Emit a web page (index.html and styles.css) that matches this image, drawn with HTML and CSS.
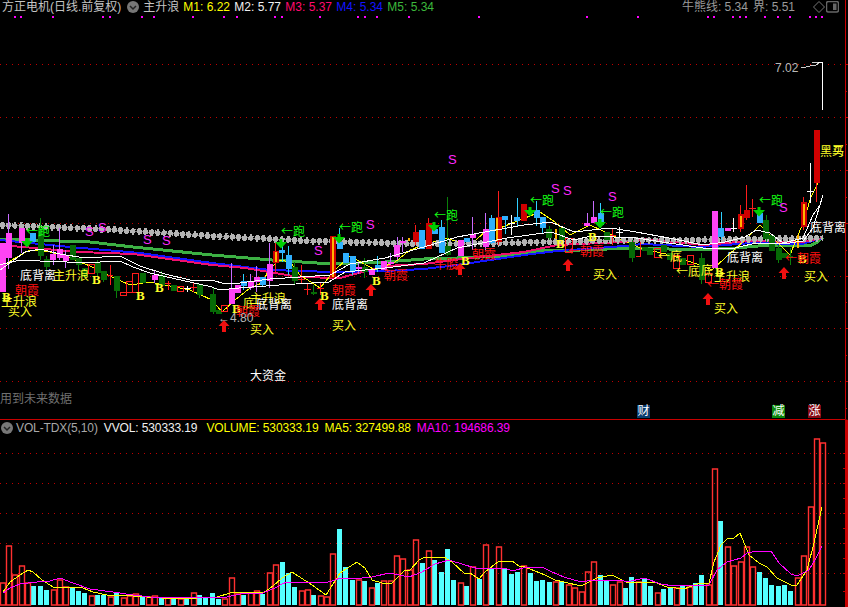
FILE: index.html
```html
<!DOCTYPE html>
<html lang="zh">
<head>
<meta charset="utf-8">
<title>方正电机</title>
<link rel="stylesheet" href="styles.css">
</head>
<body>
<div class="app">
  <section class="price-panel">
    <svg class="canvas" viewBox="0 0 846 419" width="846" height="419" aria-hidden="false">
      <defs>
        <path id="up" d="M0 0l5.5 6h-3.500v6h-4v-6h-3.500z"/>
        <path id="down" d="M-1.500 0h3v3h4.500l-6 6.500-6-6.500h4.500z"/>
      </defs>
      <path class="grid" d="M0 64.500H845M0 117.500H845M0 170.500H845M0 223.500H845M0 276.500H845M0 328.500H845M0 381.500H845"/>
      <path class="ticks" d="M845 64.500h3M845 91h2M845 117.500h3M845 144h2M845 170.500h3M845 197h2M845 223.500h3M845 250h2M845 276.500h3M845 302h2M845 328.500h3M845 355h2M845 381.500h3M845 408h2"/>
      <path class="mdots" d="M14 17h2M20 17h2M52 17h2M102 17h2M109 17h2M141 17h2M153 17h2M192 17h2M223 17h2M236 17h2M274 17h2M281 17h2M319 17h2M357 17h2M364 17h2M376 17h2M408 17h2M478 17h2M586 17h2M637 17h2M707 17h2M713 17h2M732 17h2M739 17h2M745 17h2M764 17h2M777 17h2M789 17h2M809 17h2M815 17h2M821 17h2"/>

      <polyline class="m5" points="0,239 90,242 133,247 212,255 272,260 332,264 385,262 424,259 457,258 504,256 544,250 580,250 634,248 669,249 696,250 736,248 769,245 809,246 816,243 823,237"/>
      <polyline class="m4" points="0,240 70,247 140,253 212,263 270,270 332,272 385,271 424,269 457,265 524,255 557,251 624,246 643,244 700,247 752,243 802,244 823,238"/>
      <polyline class="m3" points="0,245 80,252 133,254 212,265 245,268 299,277 340,278 385,266 424,264 470,258 524,252 557,245 624,242 646,239 703,245 750,241 802,242 823,238"/>
      <polyline class="m1" points="0,268 15,258 30,250 50,252 70,258 90,266 110,276 130,285 150,282 170,286 190,290 212,300 222,312 235,300 250,288 262,283 270,268 280,260 290,262 300,275 320,288 335,270 350,256 375,270 395,262 410,250 424,245 445,238 470,245 485,232 500,228 525,218 540,212 555,222 570,235 590,225 605,232 640,248 670,255 700,265 712,270 725,258 745,240 760,225 775,240 790,255 803,223 811,197 818,183"/>
      <g class="diamonds">
        <polyline class="d-line" points="0,225 100,229 212,236 312,241 424,244 500,243 636,240 700,240 823,238"/>
        <polyline class="d-wide" points="0,225 100,229 212,236 312,241 424,244 500,243 636,240 700,240 823,238"/>
        <polyline class="d-tall" points="0,225 100,229 212,236 312,241 424,244 500,243 636,240 700,240 823,238"/>
      </g>

      <path class="w-pk" d="M8.500 214V269M21.500 228V253M53 245V265M59.500 228V260M65.500 250V268M154.500 270V283M231.500 263V304M250.500 274V290M256.500 266V292M269.500 243V288M358.500 262V274M390.500 253V265M397 237V260M402.500 237V252M472.500 217V250M485.500 213V250M587 213V226M593.500 201V223"/>
      <path class="w-sky" d="M243.500 274V290M262.500 277V287M282 243V262M288.500 246V275M339.500 228V242M352.500 256V275M377.500 256V272M441.500 220V253M491.500 215V244M505 216V234M517 198V227M536.500 201V226M542.500 217V234M600.500 203V228M721 212V240"/>
      <path class="w-gr" d="M40.500 218V260M46.500 256V270M78.500 258V270M97.500 260V277M103.500 271V282M116.500 276V298M161.500 271V288M199.500 284V298M213 288V314M294.500 262V284M313.500 285V295M364.500 258V278M447.500 197V256M549.500 226V240M632.500 240V262M766.500 215V242M778.500 245V263M790.500 248V265M701.500 253V284"/>
      <path class="w-rd" d="M110.500 265V285M107 275h6M168.500 281V290M165 283h6M193.500 282V292M190 287h7M301.500 265V284M298 279h7M307.500 283V295M304 289h7M320.500 283V295M317 288h7M428.500 218V249M415.500 225V245M275.500 243V272M498.500 191V245M746.500 185V220M752.500 199V217M749 208h7M612.500 228V245M609 235h7M640.500 242V257M636 256h5M816.500 183V202M803.500 197V230M740.500 205V232"/>
      <path class="w-wh" d="M187.500 286V292M184 288h7M511.500 215V235M508 223h7M619.500 227V238M616 232h7M733.500 218V232M730 228h7M810.500 163V203M807 191h7M822.500 62V110M815 62.500h8"/>

      <path class="b-pk" d="M3 243V292M8.500 233V258M21.500 228V243M53 254V260M59.500 249V258M65.500 255V261M154.500 275V280M231.500 288V304M237.500 285V293M250.500 281V288M256.500 277V282M269.500 264V281M358.500 267V269M371.500 269V275M383.500 261V270M390.500 262V264M397 245V257M402.500 241V243M460.500 240V256M472.500 234V238M485.500 229V247M587 223V226M593.500 217V223M714.500 211V268M727.500 228V231"/>
      <path class="b-sky" d="M32.500 233V242M243.500 281V286M262.500 277V285M282 250V253M288.500 255V269M339.500 242V249M346 253V263M352.500 256V271M377.500 265V269M421.500 230V249M435 229V234M441.500 227V253M466.500 238V242M491.500 218V243M505 216V220M517 217V221M536.500 210V218M542.500 217V228M600.500 213V225M721 228V237M759.500 213V223"/>
      <path class="b-gr" d="M40.500 228V256M46.500 259V267M72.500 245V260M78.500 258V265M84.500 268V277M97.500 262V273M103.500 271V280M116.500 276V291M142.500 273V283M161.500 275V286M173.500 285V291M199.500 284V295M213 294V312M218.500 310V314M294.500 267V281M313.500 292V294M364.500 267V272M447.500 246V255M549 229V238M562 228V240M606.500 232V240M632 242V258M644.500 247V251M650 248V255M663.500 245V252M670 253V260M682.500 258V265M701.500 258V280M766 220V239M772 235V251M778.500 248V260M785 253V258M790 256V258"/>
      <path class="b-hol" d="M88.500 264H94V273H88.500zM120.500 292H126V295H120.500zM126.500 281H132V292H126.500zM132.500 273H138V292H132.500zM177.500 286H183V291H177.500zM221.500 305H227V311H221.500zM565.500 238H572V252H565.500zM654.500 248H660V257H654.500zM673.500 255H679V268H673.500zM687.500 255H693V264H687.500zM705.500 273H711V282H705.500z"/>
      <path class="b-rd" d="M428.500 223V249M415.500 232V242M523.500 204V221M275.500 251V263M332.500 236V278M498.500 217V242M740.500 214V229M746.500 210V218M803.500 202V227M816.500 130V183"/>
      <path class="b-or" d="M555.500 229V239M797.500 235V248M408.500 238V241M275.500 252V262M332.500 237V277M496.500 218V241M740.500 216V227M803.500 204V225"/>

      <polyline class="m2" points="0,265 10,262 23,260 40,261 67,262 100,262 120,261 133,267 150,273 167,277 190,282 212,287 219,290 239,288 279,285 329,282 345,272 385,268 424,263 457,248 507,238 551,232 574,240 591,236 636,238 669,243 703,248 735,248 756,243 783,244 803,241 813,228 823,195"/>
      <polyline class="m2b" points="0,270 10,263 25,252 40,249 60,254 85,258 120,256 140,266 165,274 190,280 212,280 225,284 240,283 270,279 300,277 330,275 350,264 385,258 424,247 457,237 524,225 551,222 574,232 610,228 636,232 669,238 703,245 725,242 745,237 756,230 770,233 783,243 803,238 813,215 820,205"/>
      <path class="arrow-line" d="M801 68l14-3M812 62.500l6 0M815 66l4-3"/>

      <use href="#down" class="ar-g" x="27" y="238"/><use href="#down" class="ar-g" x="281" y="239"/><use href="#down" class="ar-g" x="339" y="234"/><use href="#down" class="ar-g" x="434" y="222"/><use href="#down" class="ar-g" x="530" y="207"/><use href="#down" class="ar-g" x="600" y="219"/><use href="#down" class="ar-g" x="759" y="207"/>
      <use href="#up" class="ar-r" x="224" y="320"/><use href="#up" class="ar-r" x="320" y="298"/><use href="#up" class="ar-r" x="371" y="284"/><use href="#up" class="ar-r" x="460" y="263"/><use href="#up" class="ar-r" x="568" y="259"/><use href="#up" class="ar-r" x="708" y="293"/><use href="#up" class="ar-r" x="784" y="267"/>

      <g class="labels">
        <text class="t-g" x="26" y="236">←跑</text><text class="t-g" x="281" y="236">←跑</text><text class="t-g" x="339" y="232">←跑</text><text class="t-g" x="434" y="220">←跑</text><text class="t-g" x="530" y="205">←跑</text><text class="t-g" x="600" y="217">←跑</text><text class="t-g" x="759" y="205">←跑</text>
        <text class="t-m" x="85" y="236">S</text><text class="t-m" x="98" y="232">S</text><text class="t-m" x="143" y="244">S</text><text class="t-m" x="162" y="245">S</text><text class="t-m" x="314" y="255">S</text><text class="t-m" x="366" y="229">S</text><text class="t-m" x="448" y="164">S</text><text class="t-m" x="551" y="193">S</text><text class="t-m" x="563" y="195">S</text><text class="t-m" x="608" y="201">S</text><text class="t-m" x="779" y="212">S</text>
        <text class="t-w" x="20" y="280">底背离</text><text class="t-y" x="53" y="280">主升浪</text>
        <text class="t-r" x="15" y="295">朝霞</text><text class="t-y" x="1" y="306">主升浪</text><text class="t-y" x="8" y="316">买入</text>
        <text class="t-b" x="2" y="301">B</text><text class="t-b" x="92" y="284">B</text><text class="t-b" x="136" y="300">B</text><text class="t-b" x="155" y="292">B</text><text class="t-b" x="232" y="313">B</text><text class="t-b" x="320" y="300">B</text><text class="t-b" x="372" y="285">B</text><text class="t-b" x="461" y="265">B</text><text class="t-b" x="556" y="248">B</text><text class="t-b" x="588" y="241">B</text><text class="t-b" x="715" y="276">B</text><text class="t-b" x="798" y="263">B</text>
        <text class="t-y" x="243" y="308">底</text><text class="t-y" x="250" y="303">主升浪</text><text class="t-w" x="256" y="309">底背离</text><text class="t-w" x="332" y="309">底背离</text>
        <text class="t-r" x="236" y="316">朝霞</text><text class="t-r" x="332" y="295">朝霞</text><text class="t-r" x="384" y="280">朝霞</text><text class="t-r" x="472" y="259">朝霞</text><text class="t-r" x="434" y="269">牛股</text><text class="t-r" x="568" y="256">←朝霞</text>
        <text class="t-gy" x="218" y="322">←4.80</text>
        <text class="t-y" x="250" y="334">买入</text><text class="t-y" x="332" y="330">买入</text><text class="t-y" x="593" y="279">买入</text><text class="t-y" x="714" y="313">买入</text><text class="t-y" x="804" y="281">买入</text>
        <text class="t-y" x="820" y="156">黑马</text><text class="t-y" x="832" y="155">买</text>
        <text class="t-w" x="810" y="232">底背离</text><text class="t-w" x="727" y="262">底背离</text>
        <text class="t-y" x="658" y="261">←底</text><text class="t-y" x="676" y="276">←底</text><text class="t-y" x="701" y="275">底</text><text class="t-y" x="714" y="281">主升浪</text>
        <text class="t-r" x="707" y="289">←朝霞</text><text class="t-r" x="785" y="263">←朝霞</text>
        <text class="t-gy" x="775" y="72">7.02</text>
        <text class="t-w" x="250" y="380">大资金</text>
        <text class="t-fade" x="0" y="403">用到未来数据</text>
      </g>
    </svg>

    <header class="bar">
      <span class="title">方正电机(日线.前复权)</span>
      <svg class="chev" viewBox="0 0 12 12" width="12" height="12"><circle cx="6" cy="6" r="6"/><path d="M3 5l3 3 3-3"/></svg>
      <span class="title">主升浪</span>
      <span class="vals">
        <span class="c-yellow">M1: 6.22</span>
        <span class="c-white">M2: 5.77</span>
        <span class="c-rose">M3: 5.37</span>
        <span class="c-blue">M4: 5.34</span>
        <span class="c-green">M5: 5.34</span>
      </span>
      <span class="right">
        <span class="pair">牛熊线: 5.34</span>
        <span class="pair">界: 5.51</span>
        <svg class="diamond" viewBox="0 0 12 12" width="12" height="12"><path d="M6 .5L11.500 6 6 11.500 .5 6z"/></svg>
        <svg class="box" viewBox="0 0 13 12" width="13" height="12"><rect x=".5" y=".5" width="12" height="10.500" rx="2"/><path d="M7 2.500h3.500v6.500H7z"/></svg>
      </span>
    </header>
    <div class="tags">
      <span class="tag tag-blue">财</span>
      <span class="tag tag-green">减</span>
      <span class="tag tag-red">涨</span>
    </div>
  </section>

  <section class="vol-panel">
    <svg class="canvas" viewBox="0 420 848 187" width="848" height="187">
      <path class="grid" d="M0 453.500H845M0 483.500H845M0 513.500H845M0 543.500H845M0 573.500H845"/>
      <path class="vticks" d="M843 453.500h2M843 468.500h2M843 483.500h2M843 498.500h2M843 513.500h2M843 528.500h2M843 543.500h2M843 558.500h2M843 573.500h2M843 591.500h2"/>
      <path class="v-c" d="M33.500 605V586M40.500 605V586M46.500 605V590M72.500 605V587M78.500 605V591M84.500 605V593M97.500 605V595M103.500 605V595M116.500 605V592M142.500 605V597M161.500 605V597M173.500 605V597M186.500 605V599M199.500 605V595M205.500 605V598M212.500 605V593M218.500 605V599M243.500 605V595M262.500 605V594M282.500 605V562M288.500 605V573M294.500 605V587M313.500 605V595M339.500 605V529M345.500 605V567M352.500 605V580M364.500 605V581M377.500 605V583M422.500 605V563M434.500 605V560M441.500 605V572M447.500 605V549M453.500 605V580M466.500 605V586M479.500 605V579M491.500 605V568M504.500 605V568M511.500 605V574M517.500 605V572M530.500 605V573M536.500 605V581M542.500 605V580M549.500 605V582M561.500 605V581M600.500 605V575M606.500 605V580M625.500 605V588M631.500 605V577M644.500 605V578M650.500 605V586M663.500 605V589M670.500 605V587M682.500 605V586M695.500 605V583M701.500 605V575M720.500 605V521M759.500 605V572M765.500 605V578M771.500 605V585M778.500 605V586M784.500 605V585M790.500 605V591"/>
      <path class="v-r" d="M.5 605V583h5V605zM6.500 605V546h5V605zM12.500 605V575h5V605zM19.500 605V566h5V605zM25.500 605V583h5V605zM51.500 605V590h5V605zM57.500 605V580h5V605zM63.500 605V587h5V605zM89.500 605V596h5V605zM108.500 605V597h5V605zM121.500 605V598h5V605zM127.500 605V596h5V605zM133.500 605V594h5V605zM146.500 605V597h5V605zM152.500 605V596h5V605zM165.500 605V598h5V605zM178.500 605V599h5V605zM191.500 605V593h5V605zM222.500 605V599h5V605zM229.500 605V578h5V605zM235.500 605V594h5V605zM248.500 605V593h5V605zM254.500 605V591h5V605zM267.500 605V573h5V605zM273.500 605V565h5V605zM299.500 605V591h5V605zM305.500 605V590h5V605zM318.500 605V596h5V605zM324.500 605V597h5V605zM330.500 605V554h5V605zM356.500 605V580h5V605zM369.500 605V588h5V605zM381.500 605V581h5V605zM388.500 605V581h5V605zM394.500 605V556h5V605zM400.500 605V559h5V605zM407.500 605V570h5V605zM413.500 605V540h5V605zM426.500 605V551h5V605zM458.500 605V583h5V605zM470.500 605V567h5V605zM483.500 605V545h5V605zM496.500 605V547h5V605zM521.500 605V566h5V605zM553.500 605V582h5V605zM566.500 605V585h5V605zM572.500 605V588h5V605zM579.500 605V592h5V605zM585.500 605V572h5V605zM591.500 605V562h5V605zM610.500 605V585h5V605zM617.500 605V582h5V605zM636.500 605V582h5V605zM655.500 605V593h5V605zM674.500 605V588h5V605zM687.500 605V587h5V605zM706.500 605V585h5V605zM712.500 605V469h5V605zM725.500 605V547h5V605zM731.500 605V566h5V605zM738.500 605V562h5V605zM744.500 605V547h5V605zM750.500 605V567h5V605zM795.500 605V578h5V605zM801.500 605V556h5V605zM808.500 605V507h5V605zM814.500 605V439h5V605zM820.500 605V443h5V605z"/>
      <polyline class="ma5" points="3,592 10,582 20,575 28,570 33,572 42,580 53,587 70,587 83,588 93,592 107,595 133,596 147,597 177,599 197,598 217,597 230,593 247,592 263,593 273,586 282,578 292,572 312,585 326,595 340,573 357,562 365,568 372,580 382,583 392,583 404,571 410,570 419,560 425,557 444,557 452,562 465,574 470,573 479,579 485,572 499,561 512,561 519,566 525,567 545,575 555,580 564,582 581,586 597,578 612,575 626,582 654,582 667,587 684,589 697,584 709,583 714,562 721,545 727,539 734,538 740,533 749,555 759,563 767,567 777,578 791,585 797,585 807,570 814,543 822,507"/>
      <polyline class="ma10" points="3,593 10,588 20,584 37,582 50,581 60,578 73,583 90,589 113,592 133,595 150,597 200,598 227,597 240,594 263,593 277,587 282,584 287,582 315,582 325,583 335,580 340,578 352,579 372,577 389,573 409,577 422,572 435,564 449,560 465,565 479,569 485,568 505,568 512,571 527,567 542,567 552,572 564,577 581,582 594,580 621,580 627,582 644,578 661,584 674,586 709,585 717,570 727,562 741,558 747,553 757,551 771,551 779,563 791,574 797,576 809,570 816,558 822,546"/>
    </svg>
    <header class="bar bar-vol">
      <svg class="chev" viewBox="0 0 12 12" width="12" height="12"><circle cx="6" cy="6" r="6"/><path d="M3 5l3 3 3-3"/></svg>
      <span class="c-gray">VOL-TDX(5,10)</span>
      <span class="c-white">VVOL: 530333.19</span>
      <span class="c-yellow gap-l">VOLUME: 530333.19</span>
      <span class="c-yellow">MA5: 327499.88</span>
      <span class="c-magenta">MA10: 194686.39</span>
    </header>
  </section>
</div>
</body>
</html>
```
FILE: styles.css
```css
* { box-sizing: border-box; }
html, body { margin: 0; padding: 0; background: #000; }
body {
  width: 848px;
  height: 607px;
  overflow: hidden;
  font: 12px/14px "Liberation Sans", "Noto Sans CJK SC", sans-serif;
  color: #b0b0b0;
}
.app { display: flex; flex-direction: column; height: 607px; }
.price-panel {
  position: relative;
  width: 848px;
  height: 420px;
  border-bottom: 1px solid #c80000;
  border-right: 3px solid transparent;
  background: linear-gradient(#c80000, #c80000) 845px 0 / 1px 100% no-repeat;
}
.vol-panel {
  position: relative;
  height: 187px;
  border-right: 3px solid #c80000;
  padding-top: 1px;
}
.canvas { position: absolute; left: 0; top: 0; display: block; overflow: visible; }

/* header rows */
.bar {
  position: relative;
  display: flex;
  align-items: center;
  height: 14px;
  white-space: nowrap;
  padding-left: 2px;
}
.title { color: #c4c4c4; }
.bar > .chev { margin: 0 4px 0 6px; flex: none; }
.chev circle { fill: #777; }
.chev path { fill: none; stroke: #222; stroke-width: 1.500; }
.vals { display: flex; gap: 4.300px; margin-left: 4px; }
.right { display: flex; align-items: center; margin-left: auto; margin-right: 6px; color: #9a9a9a; }
.right .pair { margin-right: 5px; }
.diamond { margin-left: 13px; fill: none; stroke: #777; }
.box { margin-left: 1px; }
.box rect { fill: none; stroke: #666; stroke-width: 1.500; }
.box path { fill: #666; }
.c-yellow { color: #ffff00; }
.c-white { color: #f0f0f0; }
.c-rose { color: #ff0a6e; }
.c-blue { color: #1414ff; }
.c-green { color: #3cb83c; }
.c-gray { color: #a8a8a8; }
.c-magenta { color: #ff00ff; }

.bar-vol { padding-left: 1px; gap: 6px; letter-spacing: -0.120px; }
.bar-vol > .chev { margin: 0 -3px 0 0; }
.bar-vol .gap-l { margin-left: 3px; }

/* signal tags */
.tags {
  position: absolute;
  left: 637px;
  top: 405px;
  display: flex;
  gap: 122px;
}
.tag {
  width: 13px;
  height: 13px;
  font-size: 12px;
  line-height: 13px;
  text-align: center;
  color: #fff;
}
.tags .tag-red { margin-left: -99px; }
.tag-blue { background: #0a3c6e; }
.tag-green { background: #0a860a; }
.tag-red { background: #860a14; }

/* chart strokes */
.grid { stroke: #c00000; stroke-width: 1; stroke-dasharray: 1 5; fill: none; shape-rendering: crispEdges; }
.ticks, .vticks { stroke: #c00000; stroke-width: 1; fill: none; shape-rendering: crispEdges; }
.mdots { stroke: #ff00ff; stroke-width: 2; fill: none; shape-rendering: crispEdges; }
polyline { fill: none; shape-rendering: crispEdges; }
.m1 { stroke: #ffff00; stroke-width: 1; }
.m2, .m2b { stroke: #fff; stroke-width: 1; }
.m3 { stroke: #f0106e; stroke-width: 2; }
.m4 { stroke: #1414ff; stroke-width: 2; }
.m5 { stroke: #3cb043; stroke-width: 3; }
.d-line { stroke: #808080; stroke-width: 1; }
.d-wide { stroke: #b4b4b4; stroke-width: 4; stroke-dasharray: 5 1.220; }
.d-tall { stroke: #b4b4b4; stroke-width: 7; stroke-dasharray: 2.500 3.720; stroke-dashoffset: -1.250; }
.arrow-line { stroke: #ccc; stroke-width: 1; fill: none; shape-rendering: crispEdges; }

[class^="w-"], [class^="b-"] { fill: none; shape-rendering: crispEdges; }
.w-pk { stroke: #c86cff; stroke-width: 1; }
.w-sky { stroke: #30d0ff; stroke-width: 1; }
.w-gr { stroke: #0a800a; stroke-width: 1; }
.w-rd { stroke: #ff1c1c; stroke-width: 1; }
.w-wh { stroke: #fff; stroke-width: 1; }
.b-pk { stroke: #ff44f4; stroke-width: 6; }
.b-sky { stroke: #30b0ff; stroke-width: 6; }
.b-gr { stroke: #066a06; stroke-width: 6; }
.b-hol { stroke: #ff1c1c; stroke-width: 1; }
.b-rd { stroke: #d00000; stroke-width: 6; }
.b-or { stroke: #ffb400; stroke-width: 2; }
.ar-g { fill: #00d000; }
.ar-r { fill: #f01010; }

.labels text { font-family: "Noto Sans CJK SC", "Liberation Sans", sans-serif; font-size: 12px; }
.labels .t-w { fill: #fff; }
.labels .t-y { fill: #ffff28; }
.labels .t-r { fill: #ff1010; }
.labels .t-g { fill: #14ff14; }
.labels .t-m { fill: #ff28ff; font-family: "Liberation Sans", sans-serif; font-size: 13px; }
.labels .t-b { fill: #ffff28; font-family: "Liberation Serif", serif; font-weight: 700; font-size: 13px; }
.labels .t-gy { fill: #b8b8b8; font-family: "Liberation Sans", sans-serif; }
.labels .t-fade { fill: #707070; }

/* volume */
.v-c { stroke: #54ffff; stroke-width: 5; fill: none; shape-rendering: crispEdges; }
.v-r { stroke: #ff3030; stroke-width: 1.400; fill: none; }
.ma5 { stroke: #ffff00; stroke-width: 1; }
.ma10 { stroke: #ff00ff; stroke-width: 1; }
```
